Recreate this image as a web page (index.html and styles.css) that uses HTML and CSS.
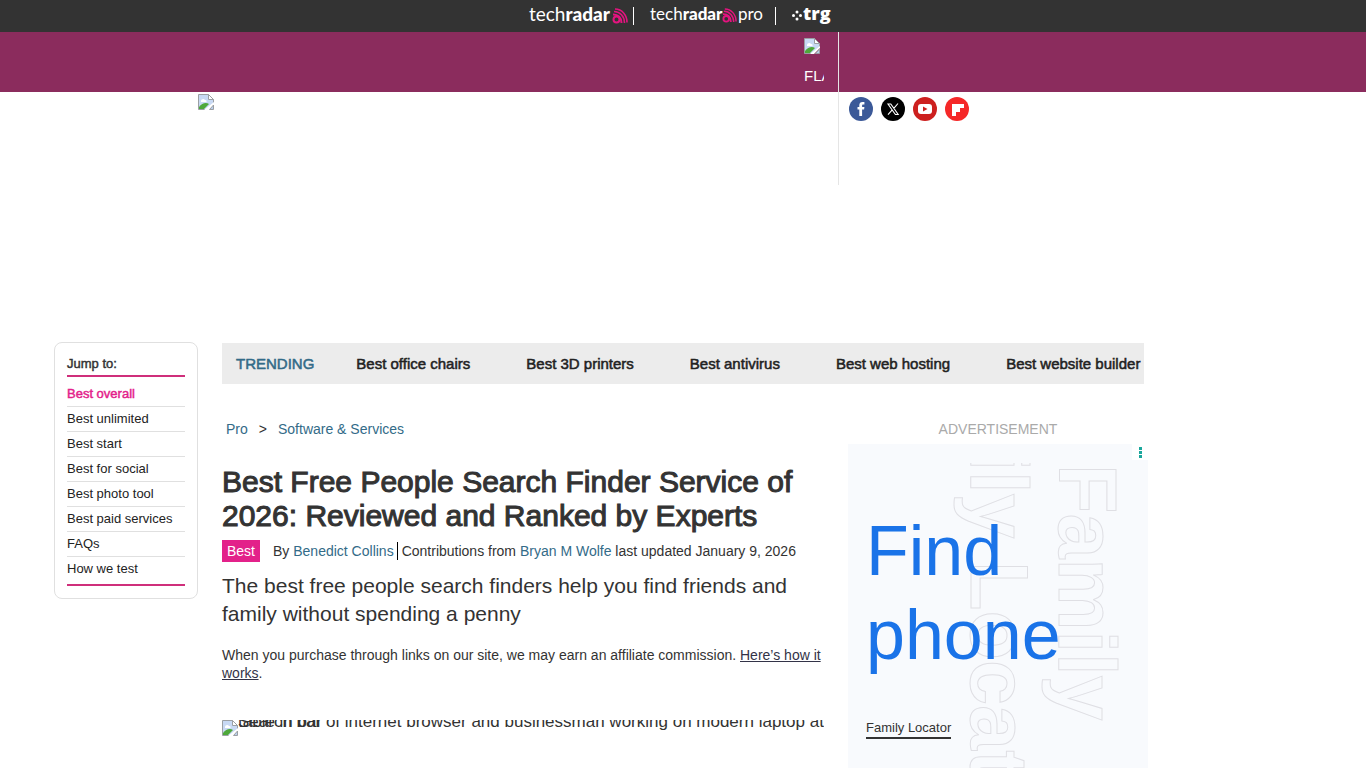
FILE: index.html
```html
<!DOCTYPE html>
<html lang="en">

<head>
  <meta charset="UTF-8" />
  <title>Best Free People Search Finder Service of 2026 | TechRadar</title>
  <meta name="viewport" content="width=device-width, initial-scale=1.0" />
  <link rel="stylesheet" href="styles.css">
</head>

<body>

  <!-- Shared icons -->
  <svg class="defs" width="0" height="0" aria-hidden="true">
    <symbol id="broken" viewBox="0 0 16 16">
      <path d="M.5.5h10l5 5v4l-7 6h-8z" fill="#c8d9f4" />
      <path d="M1 15v-2c3-4 7-5 10-3l-5 5z" fill="#4ea83a" />
      <path d="M3 7c0-2 3-3 4-1 2 0 2 2 1 2H3z" fill="#fff" />
      <path d="M7 15.500H.5V.5h10l5 5V9" fill="none" stroke="#9b9fa3" />
      <path d="M10.500.5v5h5z" fill="#fff" stroke="#9b9fa3" />
      <path d="M6 16l10-8v2l-6 6z" fill="#fff" />
      <path d="M15.500 11v4.500h-4z" fill="#b9cdec" stroke="#9b9fa3" />
    </symbol>
    <symbol id="signal" viewBox="0 0 16 16">
      <g fill="none" stroke="#e3147f">
        <circle cx="4.500" cy="11.500" r="3" stroke-width="2" />
        <path d="M1 6.500a8 8 0 0 1 8.500 8.500" stroke-width="2" />
        <path d="M2 3.500c6 0 10.500 5 10.500 11.500M3 1c7 0 12 6 12 13.500" stroke-width="1.600" />
      </g>
    </symbol>
  </svg>

  <!-- Network bar -->
  <nav class="network">
    <a href="#" class="brand" aria-label="techradar">
      <svg width="99" height="18">
        <text x="0" y="14" class="brand-text"><tspan class="light">tech</tspan><tspan class="heavy">radar</tspan></text>
        <use href="#signal" x="83" y="1" width="16" height="16" />
      </svg>
    </a>
    <a href="#" class="brand brand-mid" aria-label="techradar pro">
      <svg width="113" height="18">
        <text x="0" y="13" class="brand-text small"><tspan class="light">tech</tspan><tspan class="heavy">radar</tspan><tspan x="88" class="light">pro</tspan></text>
        <use href="#signal" x="72" y="1" width="15" height="15" />
      </svg>
    </a>
    <a href="#" class="brand" aria-label="trg">
      <svg width="39" height="18">
        <g fill="#fff">
          <circle cx="5" cy="5" r="1.500" />
          <circle cx="1.500" cy="8.500" r="1.500" />
          <circle cx="8.500" cy="8.500" r="1.500" />
          <circle cx="5" cy="12" r="1.500" />
        </g>
        <text x="11" y="13" class="trg">trg</text>
      </svg>
    </a>
  </nav>

  <!-- Masthead -->
  <header>
    <div class="flag-row">
      <div class="wrap">
        <div class="flag">
          <svg width="16" height="16"><use href="#broken" /></svg>
          <span>FLAG</span>
        </div>
        <div class="divider"></div>
      </div>
    </div>
    <div class="logo-row">
      <div class="wrap">
        <a href="#" class="logo" aria-label="TechRadar"><svg width="16" height="16"><use href="#broken" /></svg></a>
        <div class="divider social">
          <a href="#" aria-label="Facebook">
            <svg width="24" height="24" viewBox="0 0 24 24">
              <circle cx="12" cy="12" r="12" fill="#3b5998" />
              <path d="M10.300 19v-6.400H8.500v-2.500h1.800V8.300c0-2.100 1.100-3.300 3.200-3.300h1.900v2.500h-1.200c-.9 0-1.100.4-1.100 1.200v1.400h2.300l-.3 2.500h-2V19z" fill="#fff" />
            </svg>
          </a>
          <a href="#" aria-label="X">
            <svg width="24" height="24" viewBox="0 0 24 24">
              <circle cx="12" cy="12" r="12" />
              <path d="M7 7h2.800l7.400 10.500h-2.800zM17 6.500l-4.200 4.800M11 13.200l-4 4.500" fill="none" stroke="#fff" stroke-width="1.100" />
            </svg>
          </a>
          <a href="#" aria-label="YouTube">
            <svg width="24" height="24" viewBox="0 0 24 24">
              <circle cx="12" cy="12" r="12" fill="#cd201f" />
              <rect x="5" y="7" width="14" height="10" rx="3" fill="#fff" />
              <path d="M10 9.500v5l4.500-2.500z" fill="#cd201f" />
            </svg>
          </a>
          <a href="#" aria-label="Flipboard">
            <svg width="24" height="24" viewBox="0 0 24 24">
              <circle cx="12" cy="12" r="12" fill="#f52828" />
              <path d="M7 7h12v4h-4v4h-4v4H7z" fill="#fff" />
            </svg>
          </a>
        </div>
      </div>
    </div>
  </header>

  <div class="page">
    <!-- Jump links -->
    <aside class="jump">
      <h2 class="faux-bold">Jump to:</h2>
      <ul>
        <li><a href="#" class="active faux-bold">Best overall</a></li>
        <li><a href="#">Best unlimited</a></li>
        <li><a href="#">Best start</a></li>
        <li><a href="#">Best for social</a></li>
        <li><a href="#">Best photo tool</a></li>
        <li><a href="#">Best paid services</a></li>
        <li><a href="#">FAQs</a></li>
        <li><a href="#">How we test</a></li>
      </ul>
    </aside>

    <main>
      <nav class="trending faux-bold">
        <span class="trending-label">TRENDING</span>
        <a href="#">Best office chairs</a>
        <a href="#">Best 3D printers</a>
        <a href="#">Best antivirus</a>
        <a href="#">Best web hosting</a>
        <a href="#">Best website builder</a>
      </nav>

      <div class="columns">
        <article>
          <nav class="crumbs">
            <a href="#">Pro</a>
            <span>&gt;</span>
            <a href="#">Software &amp; Services</a>
          </nav>

          <h1 class="faux-bold">Best Free People Search Finder Service of 2026: Reviewed and Ranked by Experts</h1>

          <div class="byline">
            <a href="#" class="tag">Best</a>
            <span class="author">By <a href="#">Benedict Collins</a></span>
            <span>Contributions from <a href="#">Bryan M Wolfe</a> last updated January 9, 2026</span>
          </div>

          <p class="strapline">The best free people search finders help you find friends and family without spending a penny</p>

          <p class="affiliate">When you purchase through links on our site, we may earn an affiliate commission. <a href="#">Here’s how it works</a>.</p>

          <figure>
            <svg width="16" height="16"><use href="#broken" /></svg>
            <div class="alt">Search bar of internet browser and businessman working on modern laptop at<br>table in bar</div>
          </figure>
        </article>

        <aside class="sponsor">
          <div class="sponsor-label">ADVERTISEMENT</div>
          <div class="sponsor-box">
            <svg class="sponsor-art" width="300" height="581" viewBox="0 19 300 581" aria-hidden="true">
              <text transform="translate(211 20) rotate(90)">Family</text>
              <text transform="translate(123 -162) rotate(90)">Family Locator</text>
            </svg>
            <button class="sponsor-menu" aria-label="Ad options"><i></i><i></i><i></i></button>
            <div class="sponsor-title">Find phone</div>
            <a href="#" class="sponsor-link">Family Locator</a>
          </div>
        </aside>
      </div>
    </main>
  </div>

</body>

</html>
```

FILE: styles.css
```css
:root {
  --text: #333;
  --link: #336b88;
  --pink: #e3218a;
  --purple: #8b2c5d;
  --line: #e0e0e0;
}

* {
  box-sizing: border-box;
}

body {
  margin: 0;
  font-family: "Liberation Sans", Arial, sans-serif;
  font-size: 14px;
  color: var(--text);
  background: #fff;
  overflow-x: hidden;
}

a {
  color: var(--link);
  text-decoration: none;
}

svg {
  display: block;
}

.defs {
  position: absolute;
}

/* Regular weight thickened with a stroke */
.faux-bold {
  font-weight: 400;
  -webkit-text-stroke: 0.035em currentColor;
}

/* Network bar */
.network {
  display: flex;
  justify-content: center;
  align-items: center;
  height: 32px;
  padding-right: 6px;
  background: #333;
}

.brand svg {
  overflow: visible;
}

.brand-mid {
  margin: 0 16px 0 5px;
  padding: 0 12px 0 16px;
  border: solid #fff;
  border-width: 0 1px;
}

.brand-text {
  font-family: Lato, sans-serif;
  font-size: 19px;
  fill: #fff;
}

.brand-text.small {
  font-size: 17px;
}

.light {
  font-weight: 400;
}

.heavy {
  font-weight: 900;
}

.trg {
  font-family: "Open Sans", sans-serif;
  font-size: 18px;
  font-weight: 800;
  fill: #fff;
}

/* Masthead */
.wrap {
  display: grid;
  grid-template-columns: 640px 1fr;
  max-width: 970px;
  height: 100%;
  margin: 0 auto;
}

.flag-row {
  height: 60px;
  background: var(--purple);
}

.logo-row {
  height: 93px;
}

.flag {
  justify-self: end;
  width: 34px;
  padding: 6px 14px 0 0;
  color: #fff;
  font-size: 15px;
}

.flag span {
  display: block;
  margin-top: 12px;
  width: 20px;
  line-height: 20px;
  overflow: hidden;
}

.logo {
  padding-top: 2px;
}

.divider {
  border-left: 1px solid #e5e5e5;
}

.social {
  display: flex;
  gap: 8px;
  padding: 5px 10px;
}

/* Page */
.page {
  display: grid;
  grid-template-columns: 144px minmax(0, 922px) 144px;
  justify-content: center;
  align-items: start;
  gap: 24px;
  padding-top: 158px;
}

.jump {
  margin-top: -1px;
  padding: 13px 12px 12px;
  border: 1px solid var(--line);
  border-radius: 8px;
  font-size: 13px;
}

.jump h2 {
  margin: 0;
  font-size: 13px;
  line-height: 16px;
  padding-bottom: 3px;
  border-bottom: 2px solid #cf2f7b;
}

.jump ul {
  list-style: none;
  margin: 0;
  padding: 5px 0 3px;
  border-bottom: 2px solid #cf2f7b;
}

.jump li {
  line-height: 24px;
  border-bottom: 1px solid var(--line);
}

.jump li:last-child {
  border-bottom: none;
}

.jump a {
  color: #222;
}

.jump a.active {
  color: var(--pink);
}

.trending {
  display: flex;
  gap: 56px;
  height: 41px;
  padding-left: 14px;
  line-height: 42px;
  font-size: 15px;
  white-space: nowrap;
  overflow: hidden;
  background: #ececec;
}

.trending a {
  color: #222;
}

.trending-label {
  margin-right: -14px;
  color: var(--link);
}

.columns {
  display: grid;
  grid-template-columns: minmax(0, 1fr) 300px;
  gap: 24px;
  margin: 36px -4px 0 0;
}

/* Article */
.crumbs {
  display: flex;
  gap: 11px;
  padding-left: 4px;
  line-height: 18px;
}

h1 {
  margin: 27px 0 7px;
  font-size: 30px;
  line-height: 34px;
}

.byline {
  display: flex;
  align-items: center;
  height: 22px;
  line-height: 18px;
}

.tag {
  margin-right: 13px;
  padding: 0 5px;
  line-height: 22px;
  color: #fff;
  background: var(--pink);
}

.author {
  padding-right: 3px;
  margin-right: 4px;
  border-right: 1px solid #000;
}

.strapline {
  margin: 10px 0 18px;
  font-size: 21px;
  line-height: 28px;
}

.affiliate {
  margin: 0 0 38px;
  line-height: 18px;
}

.affiliate a {
  color: #333347;
  text-decoration: underline;
}

figure {
  display: flex;
  height: 338px;
  margin: 0;
  overflow: hidden;
}

.alt {
  font-size: 17px;
  line-height: 0;
  padding-top: 2px;
  white-space: nowrap;
}

/* Sponsor */
.sponsor-label {
  line-height: 18px;
  text-align: center;
  color: #aaa;
}

.sponsor-box {
  position: relative;
  height: 600px;
  margin-top: 6px;
  padding: 65px 18px 0;
  background: #f8fafd;
}

.sponsor-art {
  position: absolute;
  top: 19px;
  left: 0;
}

.sponsor-art text {
  font-size: 81px;
  font-weight: 700;
  fill: none;
  stroke: #dfdfe4;
}

.sponsor-menu {
  position: absolute;
  top: 0;
  right: 0;
  display: flex;
  flex-direction: column;
  align-items: center;
  gap: 1px;
  width: 16px;
  height: 16px;
  padding: 3px 0 0;
  border: none;
  background: #fff;
}

.sponsor-menu i {
  width: 3px;
  height: 3px;
  background: #1aa79c;
}

.sponsor-title {
  position: relative;
  width: 200px;
  font-size: 70px;
  line-height: 84px;
  color: #1a73e8;
}

.sponsor-link {
  position: relative;
  display: inline-block;
  margin-top: 42px;
  font-size: 13px;
  line-height: 18px;
  color: #333;
  border-bottom: 2px solid #333;
}
```
